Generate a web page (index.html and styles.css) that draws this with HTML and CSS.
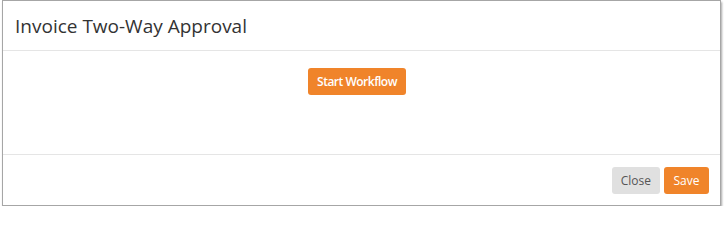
FILE: index.html
```html
<!DOCTYPE html>
<html>
<head>
<meta charset="utf-8">
<link rel="stylesheet" href="styles.css">
</head>
<body>
<div class="modal">
  <div class="modal-header">
    <h4 class="modal-title">Invoice Two-Way Approval</h4>
  </div>
  <div class="modal-body">
    <button class="btn btn-orange btn-start">Start Workflow</button>
  </div>
  <div class="modal-footer">
    <button class="btn btn-gray">Close</button>
    <button class="btn btn-orange btn-save">Save</button>
  </div>
</div>
</body>
</html>
```
FILE: styles.css
```css
html, body {
  margin: 0;
  padding: 0;
  background: #ffffff;
  font-family: "Open Sans", "Noto Sans", sans-serif;
}
.modal {
  margin-left: 2px;
  width: 717px;
  height: 204px;
  border: 1px solid #a6a6a6;
  box-shadow: 1px 2px 2px rgba(0,0,0,0.35);
  background: #fff;
  display: flex;
  flex-direction: column;
}
.modal-header {
  height: 49px;
  border-bottom: 1px solid #e5e5e5;
  padding: 0 12px;
  display: flex;
  align-items: center;
}
.modal-title {
  margin: 0;
  font-weight: 400;
  font-size: 19px;
  color: #333;
}
.modal-body {
  height: 104px;
  border-bottom: 1px solid #e5e5e5;
  display: flex;
  justify-content: center;
  align-items: flex-start;
  padding-top: 17px;
  box-sizing: border-box;
}
.modal-footer {
  flex: 1;
  display: flex;
  justify-content: flex-end;
  align-items: center;
  gap: 4px;
  padding-right: 11px;
}
.btn {
  font-family: "Open Sans", "Noto Sans", sans-serif;
  font-size: 12px;
  height: 27px;
  padding: 0 9px;
  border: none;
  border-radius: 3px;
  cursor: pointer;
}
.btn-orange {
  background: #f0842a;
  color: #fff;
}
.btn-gray {
  background: #e0e0e0;
  color: #555;
}
.btn-start {
  font-weight: 600;
  letter-spacing: -0.5px;
  margin-right: 9px;
  padding: 0 9.5px;
}
.btn-save {
  padding: 0 9.5px;
}
```
